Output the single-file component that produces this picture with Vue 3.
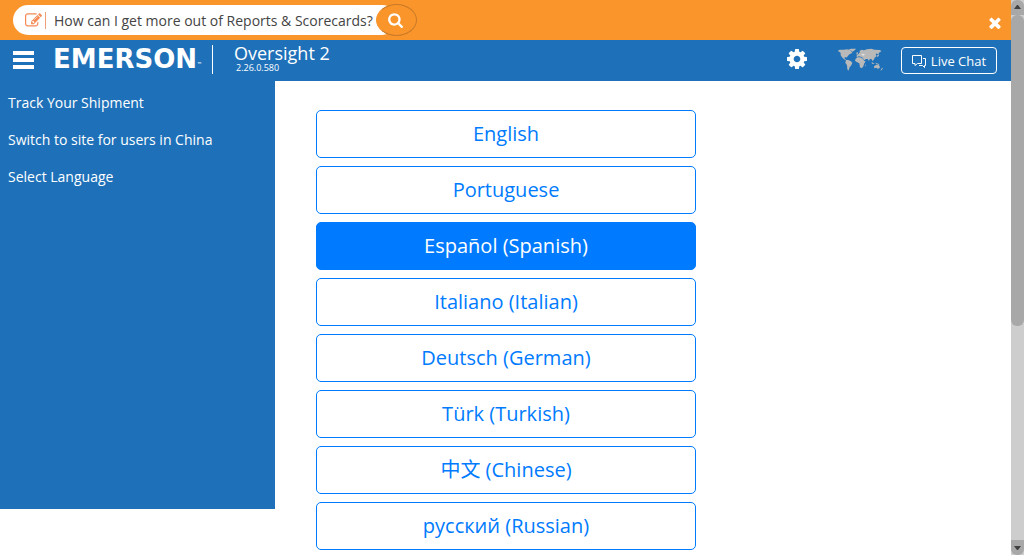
<script setup>
import { ref } from 'vue'

const query = ref('How can I get more out of Reports & Scorecards?')
const selected = ref('Español (Spanish)')
const languages = [
  'English',
  'Portuguese',
  'Español (Spanish)',
  'Italiano (Italian)',
  'Deutsch (German)',
  'Türk (Turkish)',
  '中文 (Chinese)',
  'русский (Russian)',
]
const links = ['Track Your Shipment', 'Switch to site for users in China', 'Select Language']
</script>

<template>
  <div class="shell">
    <div class="page">
      <form class="tipbar" @submit.prevent>
        <div class="pill">
          <svg class="edit" viewBox="0 0 1792 1792" aria-hidden="true">
            <path d="M888 1184l116-116-152-152-116 116v56h96v96h56zm440-720q-16-16-33 1l-350 350q-17 17-1 33t33-1l350-350q17-17 1-33zm80 594v190q0 119-84.500 203.500t-203.500 84.500h-832q-119 0-203.500-84.500t-84.500-203.500v-832q0-119 84.500-203.500t203.500-84.500h832q63 0 117 25 15 7 18 23 3 17-9 29l-49 49q-14 14-32 8-23-6-45-6h-832q-66 0-113 47t-47 113v832q0 66 47 113t113 47h832q66 0 113-47t47-113v-126q0-13 9-22l64-64q15-15 35-7t20 29zm-96-738l288 288-672 672h-288v-288zm444 132l-92 92-288-288 92-92q28-28 68-28t68 28l152 152q28 28 28 68t-28 68z" />
          </svg>
          <span class="divider"></span>
          <input v-model="query" class="query" type="text" aria-label="Search" />
        </div>
        <button class="search" type="submit" aria-label="Search">
          <svg viewBox="0 0 1664 1792" aria-hidden="true">
            <path d="M1152 832q0-185-131.500-316.500T704 384 387.500 515.500 256 832t131.500 316.500T704 1280t316.500-131.500T1152 832zm512 832q0 52-38 90t-90 38q-54 0-90-38l-343-342q-179 124-399 124-143 0-273.500-55.500t-225-150-150-225T0 832t55.500-273.500 150-225 225-150T704 128t273.500 55.500 225 150 150 225T1408 832q0 220-124 399l343 343q37 37 37 90z" />
          </svg>
        </button>
        <button class="close" type="button" aria-label="Close">
          <svg viewBox="302 302 1188 1252" aria-hidden="true">
            <path d="M1490 1322q0 40-28 68l-136 136q-28 28-68 28t-68-28l-294-294-294 294q-28 28-68 28t-68-28l-136-136q-28-28-28-68t28-68l294-294-294-294q-28-28-28-68t28-68l136-136q28-28 68-28t68 28l294 294 294-294q28-28 68-28t68 28l136 136q28 28 28 68t-28 68l-294 294 294 294q28 28 28 68z" />
          </svg>
        </button>
      </form>

      <header class="header">
        <button class="menu" type="button" aria-label="Menu">
          <span></span><span></span><span></span>
        </button>
        <div class="brand">EMERSON<small>™</small></div>
        <div class="product">
          <div class="name">Oversight 2</div>
          <div class="version">2.26.0.580</div>
        </div>
        <button class="gear" type="button" aria-label="Settings">
          <svg viewBox="128 128 1536 1536" aria-hidden="true">
            <path d="M1152 896q0-106-75-181t-181-75-181 75-75 181 75 181 181 75 181-75 75-181zm512-109v222q0 12-8 23t-20 13l-185 28q-19 54-39 91 35 50 107 138 10 12 10 25t-9 23q-27 37-99 108t-94 71q-12 0-26-9l-138-108q-44 23-91 38-16 136-29 186-7 28-36 28h-222q-14 0-24.500-8.500t-11.500-21.500l-28-184q-49-16-90-37l-141 107q-10 9-25 9-14 0-25-11-126-114-165-168-7-10-7-23 0-12 8-23 15-21 51-66.500t54-70.500q-27-50-41-99l-183-27q-13-2-21-12.500t-8-23.500v-222q0-12 8-23t19-13l186-28q14-46 39-92-40-57-107-138-10-12-10-24 0-10 9-23 26-36 98.500-107.500t94.500-71.500q13 0 26 10l138 107q44-23 91-38 16-136 29-186 7-28 36-28h222q14 0 24.500 8.500t11.500 21.500l28 184q49 16 90 37l142-107q9-9 24-9 13 0 25 10 129 119 165 170 7 8 7 22 0 12-8 23-15 21-51 66.500t-54 70.500q26 50 41 98l183 28q13 2 21 12.500t8 23.500z" />
          </svg>
        </button>
        <button class="world" type="button" aria-label="Region">
          <svg viewBox="0 0 138 72" aria-hidden="true">
            <path d="M2 9L8 5L21 5L30 4L38 6L43 10L46 15L40 17L35 21L32 25L29 29L27 27L22 29L24 34L28 35L26 37L21 34L15 28L11 22L11 15L7 11Z" />
            <path d="M34 5L42 2L57 2L54 6L47 11L42 8Z" />
            <path d="M27 36L34 36L42 40L46 45L42 53L38 57L36 64L34 68L31 64L30 52L25 44Z" />
            <path d="M56 32L61 28L70 28L78 32L82 39L86 40L82 46L78 57L73 61L69 58L67 46L59 42L54 38Z" />
            <path d="M61 20L65 17L69 12L67 9L74 5L81 7L90 4L103 2L112 5L129 6L133 10L126 14L124 20L119 16L116 20L119 24L113 29L110 36L106 39L104 34L99 32L96 39L92 33L87 33L82 37L77 29L71 26L66 25L60 27L58 24Z" />
            <path d="M58 14L62 12L63 18L59 20ZM119 24L124 19L126 23L121 27ZM104 42L110 46L114 48L105 47ZM115 44L124 47L128 51L119 49ZM111 55L118 50L122 52L124 49L129 57L127 61L122 62L118 59L112 61ZM134 61L138 59L135 65L130 68ZM84 52L87 49L85 56Z" />
            <path class="bright" d="M72 19L80 17L84 20L78 23Z" />
          </svg>
        </button>
        <button class="chat" type="button">
          <svg viewBox="0 0 14 14" aria-hidden="true">
            <path d="M.5 1.500h9v8h-4l-2.500 2v-2h-2.500zM11 4.500h2.500v7h-1v2l-2-2h-3.500" />
          </svg>
          Live Chat
        </button>
      </header>

      <div class="body">
        <nav class="sidebar">
          <a v-for="link in links" :key="link" href="#">{{ link }}</a>
        </nav>
        <main class="languages">
          <button
            v-for="language in languages"
            :key="language"
            type="button"
            :class="{ active: language === selected }"
            @click="selected = language"
          >{{ language }}</button>
        </main>
      </div>
    </div>

    <div class="scrollbar" aria-hidden="true">
      <div class="arrow up"><svg viewBox="0 0 7 5"><path d="M0 4L3 0h1l3 4z" /></svg></div>
      <div class="thumb"></div>
      <div class="arrow down"><svg viewBox="0 0 7 5"><path d="M0 1h7L4 5H3z" /></svg></div>
    </div>
  </div>
</template>

<style>
body {
  margin: 0;
  overflow: hidden;
}
</style>

<style scoped>
* {
  box-sizing: border-box;
}
.shell {
  display: flex;
  height: 100vh;
  overflow: hidden;
  background: #fff;
  font-family: "Open Sans", "Noto Sans CJK SC", sans-serif;
}
button,
input {
  margin: 0;
  padding: 0;
  border: 0;
  background: none;
  color: inherit;
  font: inherit;
}
svg {
  display: block;
  fill: currentColor;
}
.page {
  display: flex;
  flex: 1;
  flex-direction: column;
  min-width: 0;
}
.tipbar {
  display: flex;
  align-items: center;
  flex: none;
  height: 40px;
  padding: 0 10px 0 13px;
  background: #f9952b;
  color: #fff;
}
.pill {
  display: flex;
  align-items: center;
  width: 384px;
  height: 30px;
  padding-left: 12px;
  border-radius: 15px;
  background: #fff;
}
.edit {
  width: 17px;
  height: 17px;
  color: #f58a55;
}
.divider {
  width: 1px;
  height: 17px;
  margin: 0 8px 0 3px;
  background: #f0a078;
}
.query {
  flex: 1;
  min-width: 0;
  height: 24px;
  color: #444;
  font-size: 14px;
  outline: none;
}
.search {
  display: flex;
  align-items: center;
  flex: none;
  width: 41px;
  height: 32px;
  margin-left: -21px;
  padding-left: 11px;
  border: 1px solid #c97a27;
  border-left-color: #f9952b;
  border-radius: 50%;
  background: #f9952b;
}
.search svg {
  width: 15px;
  height: 16px;
}
.close {
  margin: 6px 0 0 auto;
}
.close svg {
  width: 12px;
  height: 12px;
}
.header {
  display: flex;
  align-items: center;
  flex: none;
  height: 41px;
  padding: 0 14px 3px 13px;
  background: #1e71b9;
  color: #fff;
}
.menu {
  display: flex;
  flex-direction: column;
  gap: 3px;
  width: 21px;
  margin-top: 2px;
}
.menu span {
  height: 4px;
  background: #fff;
}
.brand {
  display: flex;
  align-items: flex-end;
  width: 158px;
  margin-left: 19px;
  font: bold 26px/26px "DejaVu Sans", sans-serif;
}
.brand small {
  font-size: 5px;
  line-height: 16px;
}
.product {
  padding-left: 21px;
  border-left: 1px solid #fff;
  margin-left: 1px;
}
.name {
  font-size: 18px;
  line-height: 16px;
}
.version {
  padding-left: 2px;
  font-size: 9px;
  line-height: 13px;
}
.gear {
  margin-left: auto;
}
.gear svg {
  width: 20px;
  height: 20px;
}
.world {
  margin: 2px 18px 0 30px;
  color: #b9b9b9;
}
.world svg {
  width: 46px;
  height: 24px;
}
.bright {
  fill: #e2e2e2;
}
.chat {
  display: flex;
  align-items: center;
  justify-content: center;
  gap: 5px;
  width: 96px;
  height: 27px;
  margin-top: 3px;
  border: 1px solid #fff;
  border-radius: 4px;
  font-size: 13px;
}
.chat svg {
  width: 14px;
  height: 14px;
  fill: none;
  stroke: #fff;
}
.body {
  display: flex;
  align-items: flex-start;
  flex: 1;
  min-height: 0;
}
.sidebar {
  display: flex;
  flex-direction: column;
  gap: 17px;
  flex: none;
  width: 275px;
  height: calc(100% - 46px);
  padding: 12px 8px;
  background: #1e71b9;
}
.sidebar a {
  color: #fff;
  font-size: 14px;
  line-height: 20px;
  text-decoration: none;
}
.languages {
  display: flex;
  flex-direction: column;
  gap: 8px;
  flex: 0 1 380px;
  margin: 29px 0 0 41px;
}
.languages button {
  height: 48px;
  border: 1px solid #007bff;
  border-radius: 5px;
  color: #007bff;
  font-size: 20px;
  line-height: 30px;
}
.languages .active {
  background: #007bff;
  color: #fff;
}
.scrollbar {
  display: flex;
  flex-direction: column;
  flex: none;
  width: 13px;
  background: #cdcdcd;
}
.arrow {
  display: flex;
  align-items: center;
  justify-content: center;
  height: 15px;
  background: #a8a8a8;
}
.arrow svg {
  width: 7px;
  height: 5px;
  fill: #404040;
}
.up {
  border-radius: 6px 6px 0 0;
}
.down {
  margin-top: auto;
  border-radius: 0 0 6px 6px;
}
.thumb {
  height: 56%;
  border-radius: 6px;
  background: #a8a8a8;
}
</style>
